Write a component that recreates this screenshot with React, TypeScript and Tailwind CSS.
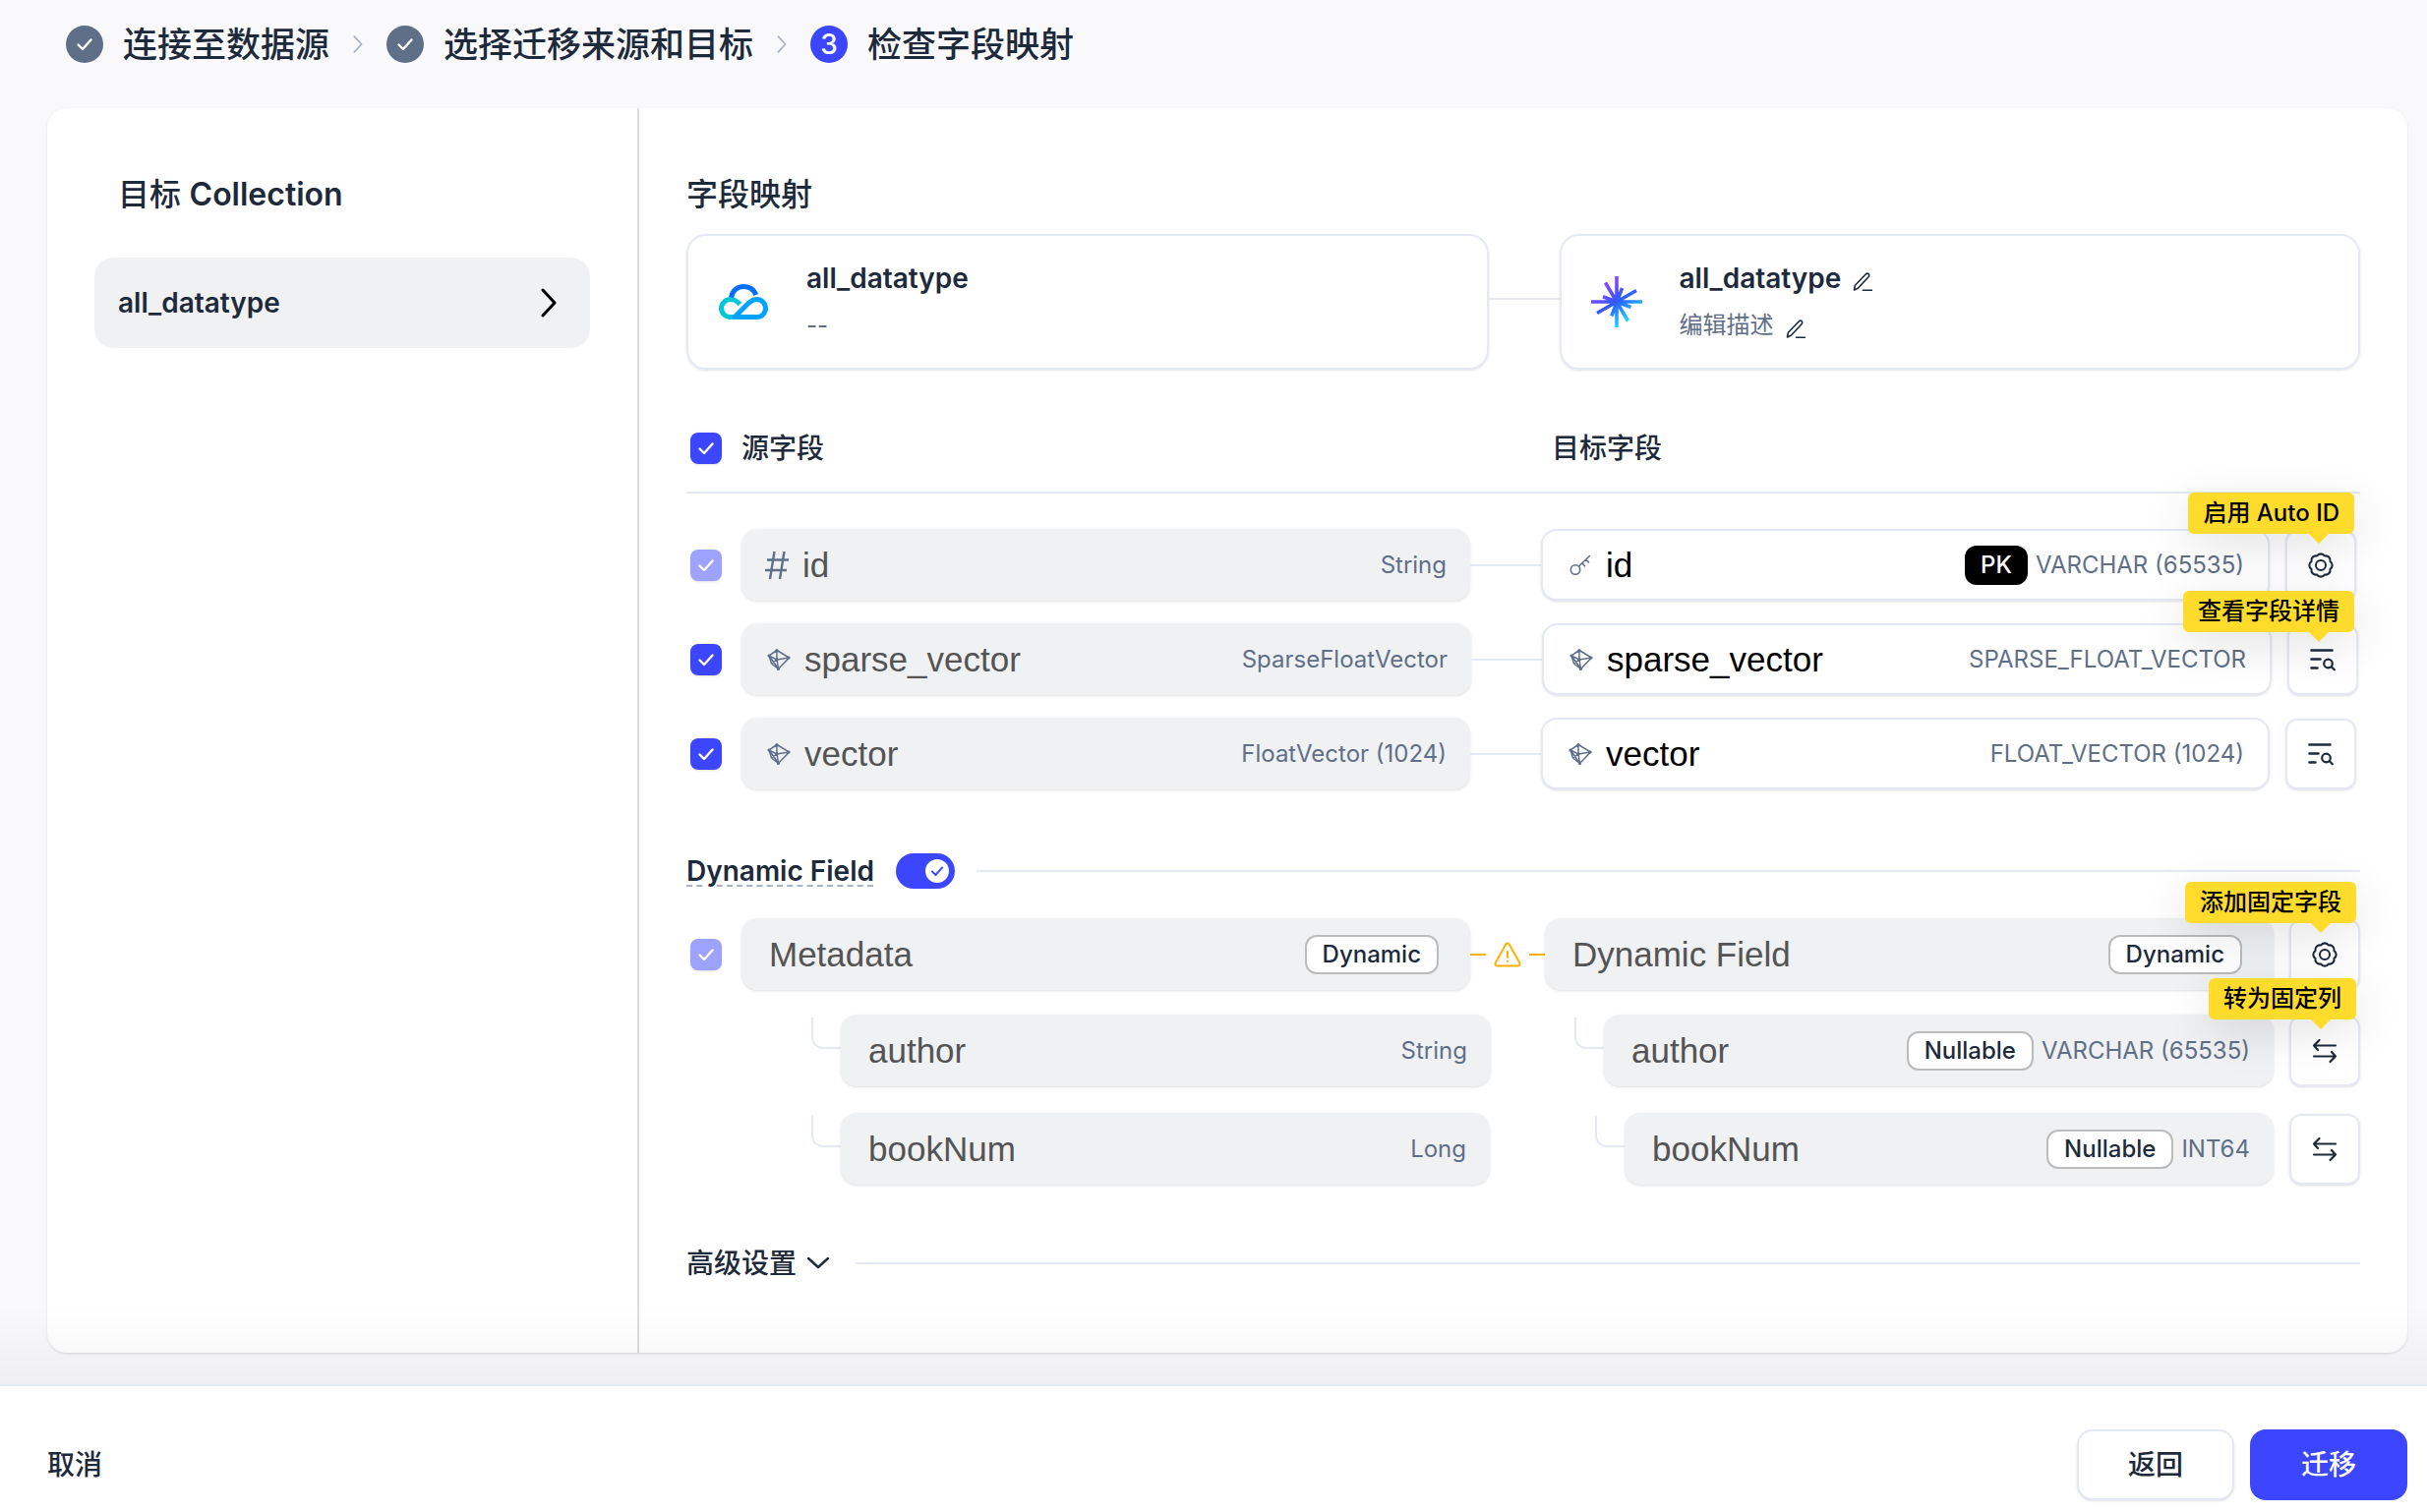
import React from "react";
import { Badge } from "lucide-react";

interface IconProps {
  className?: string;
}

const Check: React.FC<IconProps> = ({ className }) => (
  <svg viewBox="0 0 20 20" fill="none" stroke="currentColor" strokeWidth="2.4" strokeLinecap="round" strokeLinejoin="round" className={className}>
    <path d="M3.5 10.5 8 15l8.5-9.5" />
  </svg>
);

const ChevronRight: React.FC<IconProps> = ({ className }) => (
  <svg viewBox="0 0 16 30" fill="none" stroke="currentColor" strokeWidth="3" strokeLinejoin="round" strokeLinecap="round" className={className}>
    <path d="M2 2l12 13L2 28" />
  </svg>
);

const ChevronDown: React.FC<IconProps> = ({ className }) => (
  <svg viewBox="0 0 24 14" fill="none" stroke="currentColor" strokeWidth="2.4" strokeLinejoin="round" strokeLinecap="round" className={className}>
    <path d="M2 2l10 9L22 2" />
  </svg>
);

const CloudLogo: React.FC = () => (
  <svg viewBox="0 0 50 36" fill="none" strokeWidth="5" className="w-[50px] h-9 shrink-0">
    <path d="M21.5 20.5C18.5 17.5 15.5 15.6 12 15.6c-5.2 0-9.5 4-9.5 9s4.3 9 9.500 9h4" stroke="#00c8d7" />
    <path d="M12.5 13.500C13.5 7 18.500 2.500 25 2.500c6 0 10.800 3.300 12.800 8.500" stroke="#006eff" />
    <path d="M14 35.500 29.500 20c3-3 5.500-4.400 9-4.400 5 0 9 4 9 9s-4 8.900-9 8.900H14" stroke="#00a3ff" />
  </svg>
);

const StarLogo: React.FC = () => (
  <svg viewBox="0 0 52 52" fill="none" stroke="url(#star)" strokeWidth="3.6" className="w-[52px] h-[52px] shrink-0">
    <defs>
      <linearGradient id="star" gradientUnits="userSpaceOnUse" x1="12" y1="6" x2="40" y2="46">
        <stop offset="0" stopColor="#9d41ff" />
        <stop offset="0.5" stopColor="#2e5bff" />
        <stop offset="1" stopColor="#18e5ff" />
      </linearGradient>
    </defs>
    <path d="M26 0v52M0 26h52M14.500 6.500 37.500 45.500M6 37.500 46 14.500M31.500 12 20.800 40.500M12 20.800 40.500 31.500" />
  </svg>
);

const Pencil: React.FC = () => (
  <svg viewBox="0 0 20 20" fill="none" stroke="currentColor" strokeWidth="1.6" strokeLinejoin="round" strokeLinecap="round" className="w-5 h-5">
    <path d="M1.500 18l.9-4.800L13.200 2c.9-.9 2.200-1 3-.3.800.8.700 2.100-.2 3L5.300 16.300z" />
    <path d="M10.500 18.300h9" />
  </svg>
);

const KeyIcon: React.FC = () => (
  <svg viewBox="-3 0 26 22" fill="none" stroke="currentColor" strokeWidth="1.6" strokeLinecap="round" strokeLinejoin="round" className="w-[26px] h-[22px]">
    <circle cx="6" cy="15.5" r="4.7" />
    <path d="M9.500 12 20.500 1.500M13 8.700l2.500 3M16.800 5l2.700 3" />
  </svg>
);

const VectorIcon: React.FC = () => (
  <svg viewBox="-2 0 26 24" fill="none" stroke="currentColor" strokeWidth="1.5" strokeLinejoin="round" className="w-[26px] h-6">
    <path d="M10 2.500 22.500 10 11.500 21.500 2 7.800zM2 7.800l8 4.200 12.500-2M10 2.500V12l1.500 9.500M10 12l-5.500 4M2 7.800 4.500 16l7 5.500" />
    <g fill="currentColor" stroke="none">
      <circle cx="10" cy="2.5" r="1.6" />
      <circle cx="22" cy="10" r="1.6" />
      <circle cx="2" cy="8" r="1.6" />
      <circle cx="10" cy="12" r="1.6" />
      <circle cx="11.5" cy="21.5" r="1.6" />
    </g>
  </svg>
);

const Hash: React.FC = () => (
  <svg viewBox="0 0 24 30" fill="none" stroke="currentColor" strokeWidth="2.4" className="w-6 h-[30px]">
    <path d="M9.500 1 5 29M19.500 1 15 29M2 9.500h22M0 20h22" />
  </svg>
);

const GearIcon: React.FC = () => (
  <span className="relative flex">
    <Badge className="w-7 h-7" strokeWidth={1.8} />
    <svg viewBox="0 0 28 28" fill="none" stroke="currentColor" strokeWidth="2" className="absolute inset-0 w-7 h-7">
      <circle cx="14" cy="14" r="5" />
    </svg>
  </span>
);

const SearchListIcon: React.FC = () => (
  <svg viewBox="0 0 26 24" fill="none" stroke="currentColor" strokeWidth="2.6" strokeLinecap="round" className="w-[26px] h-6">
    <path d="M1.500 2.500h21M1.500 11.500h9M1.500 20.500h6" />
    <circle cx="18.5" cy="16" r="4.3" strokeWidth="2.2" />
    <path d="m21.800 19.300 3 3" strokeWidth="2.2" />
  </svg>
);

const SwapIcon: React.FC = () => (
  <svg viewBox="0 0 26 26" fill="none" stroke="currentColor" strokeWidth="2.2" strokeLinecap="round" strokeLinejoin="round" className="w-[26px] h-[26px]">
    <path d="M24 7.500H2M7.500 2 2 7.500l4 4.500M2 18.500h22M18.500 24l5.500-5.500-4-4.500" />
  </svg>
);

const WarnIcon: React.FC = () => (
  <svg viewBox="0 0 28 26" fill="none" stroke="currentColor" strokeWidth="2" strokeLinejoin="round" strokeLinecap="round" className="w-7 h-[26px]">
    <path d="M12.300 2.500c.8-1.300 2.600-1.300 3.400 0l10.600 19c.7 1.300-.2 2.900-1.700 2.900H3.400c-1.500 0-2.400-1.600-1.700-2.900z" />
    <path d="M14 10v6M14 19.800v.2" />
  </svg>
);

interface CheckboxProps {
  label: string;
  disabled?: boolean;
}

const Checkbox: React.FC<CheckboxProps> = ({ label, disabled }) => (
  <span className="relative ml-1 mr-5 w-8 h-8 shrink-0">
    <input
      type="checkbox"
      aria-label={label}
      defaultChecked
      disabled={disabled}
      className="block w-8 h-8 appearance-none rounded-lg bg-[#3d46ff] shadow-sm disabled:bg-[#9ea2ff]"
    />
    <Check className="absolute left-1.5 top-1.5 w-5 h-5 text-white pointer-events-none" />
  </span>
);

interface FieldProps {
  name: string;
  label: string;
  icon?: React.ReactNode;
  badge?: string;
  type?: string;
  editable?: boolean;
  className?: string;
}

const Field: React.FC<FieldProps> = ({ name, label, icon, badge, type, editable, className = "flex-1" }) => (
  <div className={`${className} min-w-0`}>
    <div
      className={`flex items-center h-[73px] rounded-2xl shadow-sm text-[#5f6f88] ${
        editable ? "bg-white border-2 border-[#e4e9f3] px-6" : `bg-[#f0f1f3] ${icon ? "pl-6" : "pl-7"} ${type ? "pr-6" : "pr-8"}`
      }`}
    >
      {icon && <span className="mr-3.5 shrink-0">{icon}</span>}
      <input
        aria-label={label}
        defaultValue={name}
        disabled={!editable}
        className="flex-1 min-w-0 bg-transparent outline-none font-['Liberation_Sans',Arial,sans-serif] text-[35px] leading-[40px] text-black disabled:text-[#545454]"
      />
      {badge === "PK" && <span className="h-10 px-4 flex items-center rounded-xl bg-black text-white font-medium">PK</span>}
      {badge && badge !== "PK" && (
        <span className="h-10 px-4 flex items-center rounded-xl border-2 border-[#bbbbbb] bg-white text-[#1d2a3b] font-medium">{badge}</span>
      )}
      {type && <span className="ml-2 whitespace-nowrap">{type}</span>}
    </div>
  </div>
);

interface ActionProps {
  label: string;
  icon: React.ReactNode;
  tip?: string;
  tipClass?: string;
}

const Action: React.FC<ActionProps> = ({ label, icon, tip, tipClass }) => (
  <div className="relative ml-4 shrink-0">
    <button aria-label={label} className="flex items-center justify-center w-[72px] h-[72px] rounded-xl border-2 border-[#e4e9f3] bg-white text-[#1d2a3b] shadow-sm">
      {icon}
    </button>
    {tip && (
      <div role="tooltip" className={`absolute z-10 ${tipClass} h-[42px] px-[15px] flex items-center rounded-md bg-[#ffdc2c] text-black font-medium whitespace-nowrap shadow-[0_12px_48px_rgba(0,0,0,0.12)]`}>
        {tip}
        <svg viewBox="0 0 20 10" className="absolute right-[26px] top-full w-5 h-2.5">
          <path d="M0 0h20L10 10z" fill="#ffdc2c" />
        </svg>
      </div>
    )}
  </div>
);

const Link: React.FC = () => <div className="w-[72px] h-0.5 shrink-0 bg-[#e4e9f3]" />;

const Elbow: React.FC = () => <div className="w-[30px] h-8 mt-[3px] shrink-0 self-start border-l-2 border-b-2 border-[#e4e9f3] rounded-bl-xl" />;

const Step: React.FC<{ done?: boolean; index: number; text: string }> = ({ done, index, text }) => (
  <li className="flex items-center gap-5">
    <span className={`flex items-center justify-center w-[38px] h-[38px] rounded-full text-white text-[28px] leading-none font-medium ${done ? "bg-[#5f6f88]" : "bg-[#3d46ff]"}`}>
      {done ? <Check className="w-5 h-5" /> : index}
    </span>
    <span>{text}</span>
  </li>
);

const rows = [
  { name: "id", source: "String", target: "VARCHAR (65535)", badge: "PK", locked: true, pad: "pr-1", label: "Auto ID", tip: "启用 Auto ID", tipClass: "right-0.5 bottom-17" },
  { name: "sparse_vector", source: "SparseFloatVector", target: "SPARSE_FLOAT_VECTOR", pad: "pr-0.5", label: "字段详情", tip: "查看字段详情", tipClass: "right-1 bottom-16" },
  { name: "vector", source: "FloatVector (1024)", target: "FLOAT_VECTOR (1024)", pad: "pr-1", label: "字段详情" },
];

export default function App() {
  return (
    <div className="min-h-screen flex flex-col bg-[#f9f9fc] text-[#1d2a3b] font-[Inter,'Noto_Sans_CJK_SC',sans-serif] text-[24px] leading-[32px]">
      <ol className="flex items-center h-[110px] pb-5 pl-[67px] text-[35px] leading-[48px] font-medium">
        <Step done index={1} text="连接至数据源" />
        <ChevronRight className="mx-[23px] w-3 h-[18px] text-[#a9b4c6]" />
        <Step done index={2} text="选择迁移来源和目标" />
        <ChevronRight className="mx-[23px] w-3 h-[18px] text-[#a9b4c6]" />
        <Step index={3} text="检查字段映射" />
      </ol>

      <main className="flex-1 flex ml-12 mr-5 mb-8 rounded-[20px] bg-white shadow-sm">
        <aside className="w-[602px] shrink-0 border-r-2 border-[#dddee0] px-12 pt-16">
          <h2 className="pl-6 text-[32px] leading-[48px] font-medium">
            目标 <span className="font-semibold">Collection</span>
          </h2>
          <button className="mt-10 w-full h-[92px] flex items-center justify-between pl-6 pr-[34px] rounded-[20px] bg-[#f0f1f3] text-[28px] font-semibold">
            all_datatype
            <ChevronRight className="w-4 h-[30px] text-black" />
          </button>
        </aside>

        <section className="flex-1 min-w-0 px-12 pt-16 pb-12">
          <h2 className="text-[32px] leading-[48px] font-medium">字段映射</h2>
          <div className="mt-4 flex items-center">
            <div className="flex-1 h-[138px] flex items-center pl-[31px] rounded-[20px] border-2 border-[#e4e9f3] shadow-sm">
              <CloudLogo />
              <div className="ml-[39px]">
                <p className="text-[28px] leading-[48px] font-semibold">all_datatype</p>
                <p className="leading-[48px] text-[#5f6f88]">--</p>
              </div>
            </div>
            <div className="pb-1.5">
              <Link />
            </div>
            <div className="flex-1 h-[138px] flex items-center pl-[30px] rounded-[20px] border-2 border-[#e4e9f3] shadow-sm">
              <StarLogo />
              <div className="ml-[38px]">
                <p className="flex items-center gap-3 text-[28px] leading-[48px] font-semibold">
                  all_datatype
                  <button aria-label="编辑名称" className="pt-2"><Pencil /></button>
                </p>
                <p className="flex items-center gap-3 leading-[48px] text-[#5f6f88]">
                  编辑描述
                  <button aria-label="编辑描述" className="pt-2 text-[#1d2a3b]"><Pencil /></button>
                </p>
              </div>
            </div>
          </div>

          <div className="mt-[60px] flex items-center pb-6 border-b-2 border-[#e4e9f3] text-[28px] leading-[40px] font-medium">
            <Checkbox label="源字段" />
            <span className="w-[824px]">源字段</span>
            <span>目标字段</span>
          </div>

          <div className="mt-9 flex flex-col gap-[23px]">
            {rows.map((row) => (
              <div key={row.name} className={`flex items-center ${row.pad}`}>
                <Checkbox label={row.name} disabled={row.locked} />
                <Field name={row.name} label={`源字段 ${row.name}`} type={row.source} icon={row.locked ? <Hash /> : <VectorIcon />} />
                <Link />
                <Field editable name={row.name} label={`目标字段 ${row.name}`} type={row.target} badge={row.badge} icon={row.locked ? <KeyIcon /> : <VectorIcon />} />
                <Action label={row.label} icon={row.locked ? <GearIcon /> : <SearchListIcon />} tip={row.tip} tipClass={row.tipClass} />
              </div>
            ))}
          </div>

          <div className="mt-[63px] h-10 flex items-center text-[28px] leading-[40px] font-semibold">
            <label htmlFor="dynamic" className="underline decoration-dashed decoration-2 decoration-[#a9b4c2] underline-offset-4">Dynamic Field</label>
            <span className="relative mx-[22px] w-[60px] h-9 text-[#3d46ff]">
              <input id="dynamic" type="checkbox" role="switch" defaultChecked className="block w-[60px] h-9 appearance-none rounded-full bg-[#3d46ff]" />
              <span className="absolute right-1.5 top-1.5 w-6 h-6 flex items-center justify-center rounded-full bg-white pointer-events-none">
                <Check className="w-4 h-4" />
              </span>
            </span>
            <div className="flex-1 h-0.5 bg-[#e4e9f3]" />
          </div>

          <div className="mt-7 flex items-center">
            <Checkbox label="Metadata" disabled />
            <Field name="Metadata" label="源字段 Metadata" badge="Dynamic" />
            <div className="w-[76px] shrink-0 flex items-center justify-between text-[#ffb200]">
              <span className="w-4 h-0.5 bg-[#ffb200]" />
              <WarnIcon />
              <span className="w-4 h-0.5 bg-[#ffb200]" />
            </div>
            <Field name="Dynamic Field" label="目标字段 Dynamic Field" badge="Dynamic" />
            <Action label="添加固定字段" icon={<GearIcon />} tip="添加固定字段" tipClass="right-1 bottom-17" />
          </div>
          <div className="mt-[25px] flex items-center pl-[127px]">
            <Elbow />
            <Field name="author" label="源字段 author" type="String" className="flex-33" />
            <div className="w-[85px]" />
            <Elbow />
            <Field name="author" label="目标字段 author" type="VARCHAR (65535)" badge="Nullable" className="flex-34" />
            <Action label="转为固定列" icon={<SwapIcon />} tip="转为固定列" tipClass="right-1 bottom-17" />
          </div>
          <div className="mt-[27px] flex items-center pl-[127px]">
            <Elbow />
            <Field name="bookNum" label="源字段 bookNum" type="Long" />
            <div className="w-[107px]" />
            <Elbow />
            <Field name="bookNum" label="目标字段 bookNum" type="INT64" badge="Nullable" />
            <Action label="转为固定列" icon={<SwapIcon />} />
          </div>

          <div className="mt-[60px] flex items-center gap-[26px]">
            <button className="flex items-center gap-2.5 text-[28px] leading-[40px] font-medium">
              高级设置
              <ChevronDown className="w-6 h-3.5" />
            </button>
            <div className="flex-1 h-0.5 bg-[#e4e9f3]" />
          </div>
        </section>
      </main>

      <footer className="relative flex items-center gap-4 h-[130px] pl-12 pr-5 pt-8 border-t-2 border-[#e4e9f3] bg-white text-[28px] leading-[40px] font-medium">
        <div className="absolute inset-x-0 bottom-full mb-0.5 h-20 bg-linear-to-t from-black/4 to-transparent pointer-events-none" />
        <button>取消</button>
        <button className="ml-auto w-40 h-[72px] rounded-2xl border-2 border-[#e4e9f3] bg-white shadow-sm">返回</button>
        <button className="w-40 h-[72px] rounded-2xl bg-[#3d46ff] text-white">迁移</button>
      </footer>
    </div>
  );
}
